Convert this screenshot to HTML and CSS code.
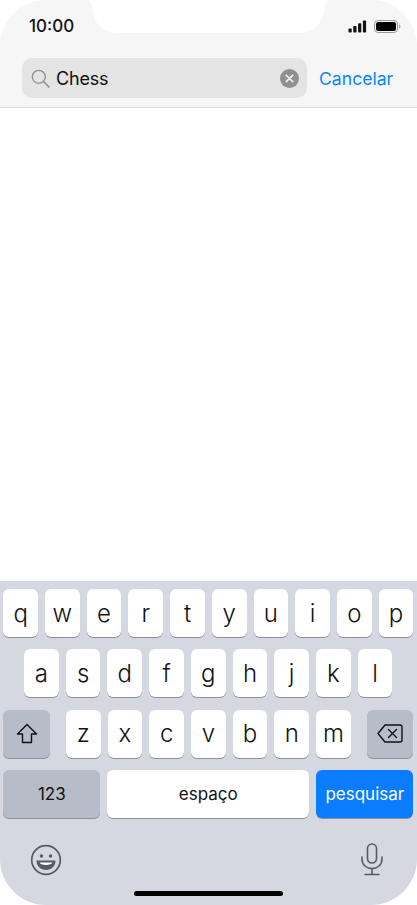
FILE: index.html
```html
<!DOCTYPE html>
<html>
  <head>
    <title>Search</title>
    <link rel="stylesheet" href="styles.css">
  </head>
  <body>
    <div class="phone">
      <svg class="notch" width="417" height="34" viewBox="0 0 417 34">
        <path d="M86 0c4 0 6 3 6.500 8C93.500 22 102 33 117 33h183c15 0 23.500-11 24.500-25 .5-5 2.500-8 6.500-8z" fill="white"/>
      </svg>
      <div class="header">
        <div class="status">
          <span class="time">10:00</span>
          <div class="status-icons">
            <svg width="20" height="13" viewBox="0 0 20 13">
              <rect x="0.5" y="8.5" width="3.2" height="4" rx="0.8" fill="#111"/>
              <rect x="5.3" y="6" width="3.2" height="6.5" rx="0.8" fill="#111"/>
              <rect x="10.1" y="3.2" width="3.2" height="9.3" rx="0.8" fill="#111"/>
              <rect x="14.9" y="0.5" width="3.2" height="12" rx="0.8" fill="#111"/>
            </svg>
            <svg width="27" height="13" viewBox="0 0 27 13">
              <rect x="0.5" y="0.5" width="23" height="12" rx="3.6" fill="none" stroke="#999"/>
              <rect x="2" y="2" width="20" height="9" rx="2.2" fill="#000"/>
              <path d="M25 4.500c1 .3 1.500 1 1.500 2s-.5 1.700-1.500 2z" fill="#aaa"/>
            </svg>
          </div>
        </div>
        <div class="search-row">
          <div class="search-box">
            <svg class="search-icon" width="19" height="19" viewBox="0 0 19 19">
              <circle cx="7.800" cy="7.800" r="6.500" fill="none" stroke="#8e8e93" stroke-width="1.300"/>
              <path d="M12.500 12.500l5.500 5.500" stroke="#8e8e93" stroke-width="1.600" stroke-linecap="round"/>
            </svg>
            <span class="search-text">Chess</span>
            <svg class="clear-icon" width="19" height="19" viewBox="0 0 19 19">
              <circle cx="9.500" cy="9.500" r="9.500" fill="#8e8e93"/>
              <path d="M6.300 6.300l6.400 6.400M12.700 6.300l-6.400 6.400" stroke="#eee" stroke-width="1.800" stroke-linecap="round"/>
            </svg>
          </div>
          <span class="cancel">Cancelar</span>
        </div>
      </div>
      <div class="content"></div>
      <div class="keyboard">
        <div class="row">
          <div class="key">q</div>
          <div class="key">w</div>
          <div class="key">e</div>
          <div class="key">r</div>
          <div class="key">t</div>
          <div class="key">y</div>
          <div class="key">u</div>
          <div class="key">i</div>
          <div class="key">o</div>
          <div class="key">p</div>
        </div>
        <div class="row row-mid">
          <div class="key">a</div>
          <div class="key">s</div>
          <div class="key">d</div>
          <div class="key">f</div>
          <div class="key">g</div>
          <div class="key">h</div>
          <div class="key">j</div>
          <div class="key">k</div>
          <div class="key">l</div>
        </div>
        <div class="row row-third">
          <div class="key key-dark key-mod">
            <svg width="22" height="21" viewBox="0 0 22 21">
              <path d="M11 1.500L1.500 11h5v8.500h9V11h5z" fill="none" stroke="#111" stroke-width="1.400" stroke-linejoin="round"/>
            </svg>
          </div>
          <div class="letters">
            <div class="key">z</div>
            <div class="key">x</div>
            <div class="key">c</div>
            <div class="key">v</div>
            <div class="key">b</div>
            <div class="key">n</div>
            <div class="key">m</div>
          </div>
          <div class="key key-dark key-mod">
            <svg width="26" height="19" viewBox="0 0 26 19">
              <path d="M8 1h15a2 2 0 0 1 2 2v13a2 2 0 0 1-2 2H8l-7-8.500z" fill="none" stroke="#111" stroke-width="1.400" stroke-linejoin="round"/>
              <path d="M11.500 5.500l8 8M19.500 5.500l-8 8" stroke="#111" stroke-width="1.400" stroke-linecap="round"/>
            </svg>
          </div>
        </div>
        <div class="row">
          <div class="key key-dark key-small key-num">123</div>
          <div class="key key-small key-space">espaço</div>
          <div class="key key-blue key-small key-search">pesquisar</div>
        </div>
        <div class="bottom">
          <svg class="emoji" width="32" height="32" viewBox="0 0 32 32">
            <circle cx="16" cy="16" r="14.300" fill="none" stroke="#555a63" stroke-width="1.700"/>
            <circle cx="11.500" cy="12" r="1.700" fill="#555a63"/>
            <circle cx="20.500" cy="12" r="1.700" fill="#555a63"/>
            <path d="M6.500 16.500h19c0 5.500-4 9.500-9.500 9.500s-9.500-4-9.500-9.500z" fill="#555a63"/>
            <path d="M9.500 18.500h13c-.5 1.500-3 2.500-6.500 2.500s-6-1-6.500-2.500z" fill="#fff"/>
          </svg>
          <svg width="24" height="33" viewBox="0 0 24 33">
            <rect x="7.500" y="1" width="9" height="19" rx="4.500" fill="none" stroke="#555a63" stroke-width="1.600"/>
            <path d="M2 14v2c0 6 4.500 9.500 10 9.500s10-3.500 10-9.500v-2M12 25.500V31M5 31.500h14" fill="none" stroke="#555a63" stroke-width="1.600" stroke-linecap="round"/>
          </svg>
        </div>
        <div class="home-bar"></div>
      </div>
    </div>
  </body>
</html>
```

FILE: styles.css
```css
html,
body {
  margin: 0;
  padding: 0;
  background: white;
}
body {
  font-family: Inter, "Liberation Sans", sans-serif;
}
.phone {
  position: relative;
  width: 417px;
  height: 905px;
  display: flex;
  flex-direction: column;
  border-radius: 46px;
  overflow: hidden;
  background: white;
}
.notch {
  position: absolute;
  top: 0;
  left: 0;
}
.header {
  height: 107px;
  background: #f6f6f6;
  border-bottom: 1px solid #dedede;
}
.status {
  height: 52px;
  padding: 0 16px 0 29px;
  display: flex;
  justify-content: space-between;
  align-items: center;
}
.time {
  font-size: 17px;
  font-weight: 500;
  color: #111;
}
.status-icons {
  display: flex;
  align-items: center;
  gap: 6px;
}
.search-row {
  display: flex;
  align-items: center;
  padding: 6px 23px 0 22px;
}
.search-box {
  width: 285px;
  height: 40px;
  box-sizing: border-box;
  background: #e4e4e4;
  border-radius: 10px;
  display: flex;
  align-items: center;
  padding: 0 8px 0 9px;
}
.search-icon {
  flex: none;
}
.search-text {
  flex: 1;
  margin-left: 6px;
  font-size: 18px;
  letter-spacing: -0.2px;
  color: #111;
}
.cancel {
  margin-left: 12px;
  font-size: 17.600px;
  color: #0a84ff;
}
.content {
  flex: 1;
  background: white;
}
.keyboard {
  height: 324px;
  box-sizing: border-box;
  padding-top: 8px;
  background: #d5d8e0;
  position: relative;
}
.row {
  display: flex;
  gap: 7px;
  padding: 0 3.700px 0 3.300px;
  margin-bottom: 12.250px;
}
.row-mid {
  padding: 0 24.500px 0 24px;
}
.row-third {
  justify-content: space-between;
}
.letters {
  display: flex;
  gap: 7px;
  flex: 1;
  padding: 0 9px;
}
.key {
  flex: 1;
  height: 48px;
  box-sizing: border-box;
  background: white;
  border-radius: 6px;
  box-shadow: 0 1px 0 #8f9196;
  display: flex;
  align-items: center;
  justify-content: center;
  font-size: 24px;
  font-weight: 300;
  color: #111;
}
.key-small {
  font-size: 17px;
  font-weight: 400;
}
.key-dark {
  background: #b6bcc8;
}
.key-blue {
  background: #0a7cff;
  color: white;
}
.key-mod {
  flex: none;
  width: 46.500px;
}
.key-num,
.key-search {
  flex: none;
  width: 97px;
}
.bottom {
  display: flex;
  justify-content: space-between;
  align-items: center;
  padding: 12px 33px 0 30px;
}
.emoji {
  margin-top: 2px;
}
.home-bar {
  position: absolute;
  left: 134px;
  bottom: 9px;
  width: 149px;
  height: 5px;
  border-radius: 3px;
  background: black;
}
```
